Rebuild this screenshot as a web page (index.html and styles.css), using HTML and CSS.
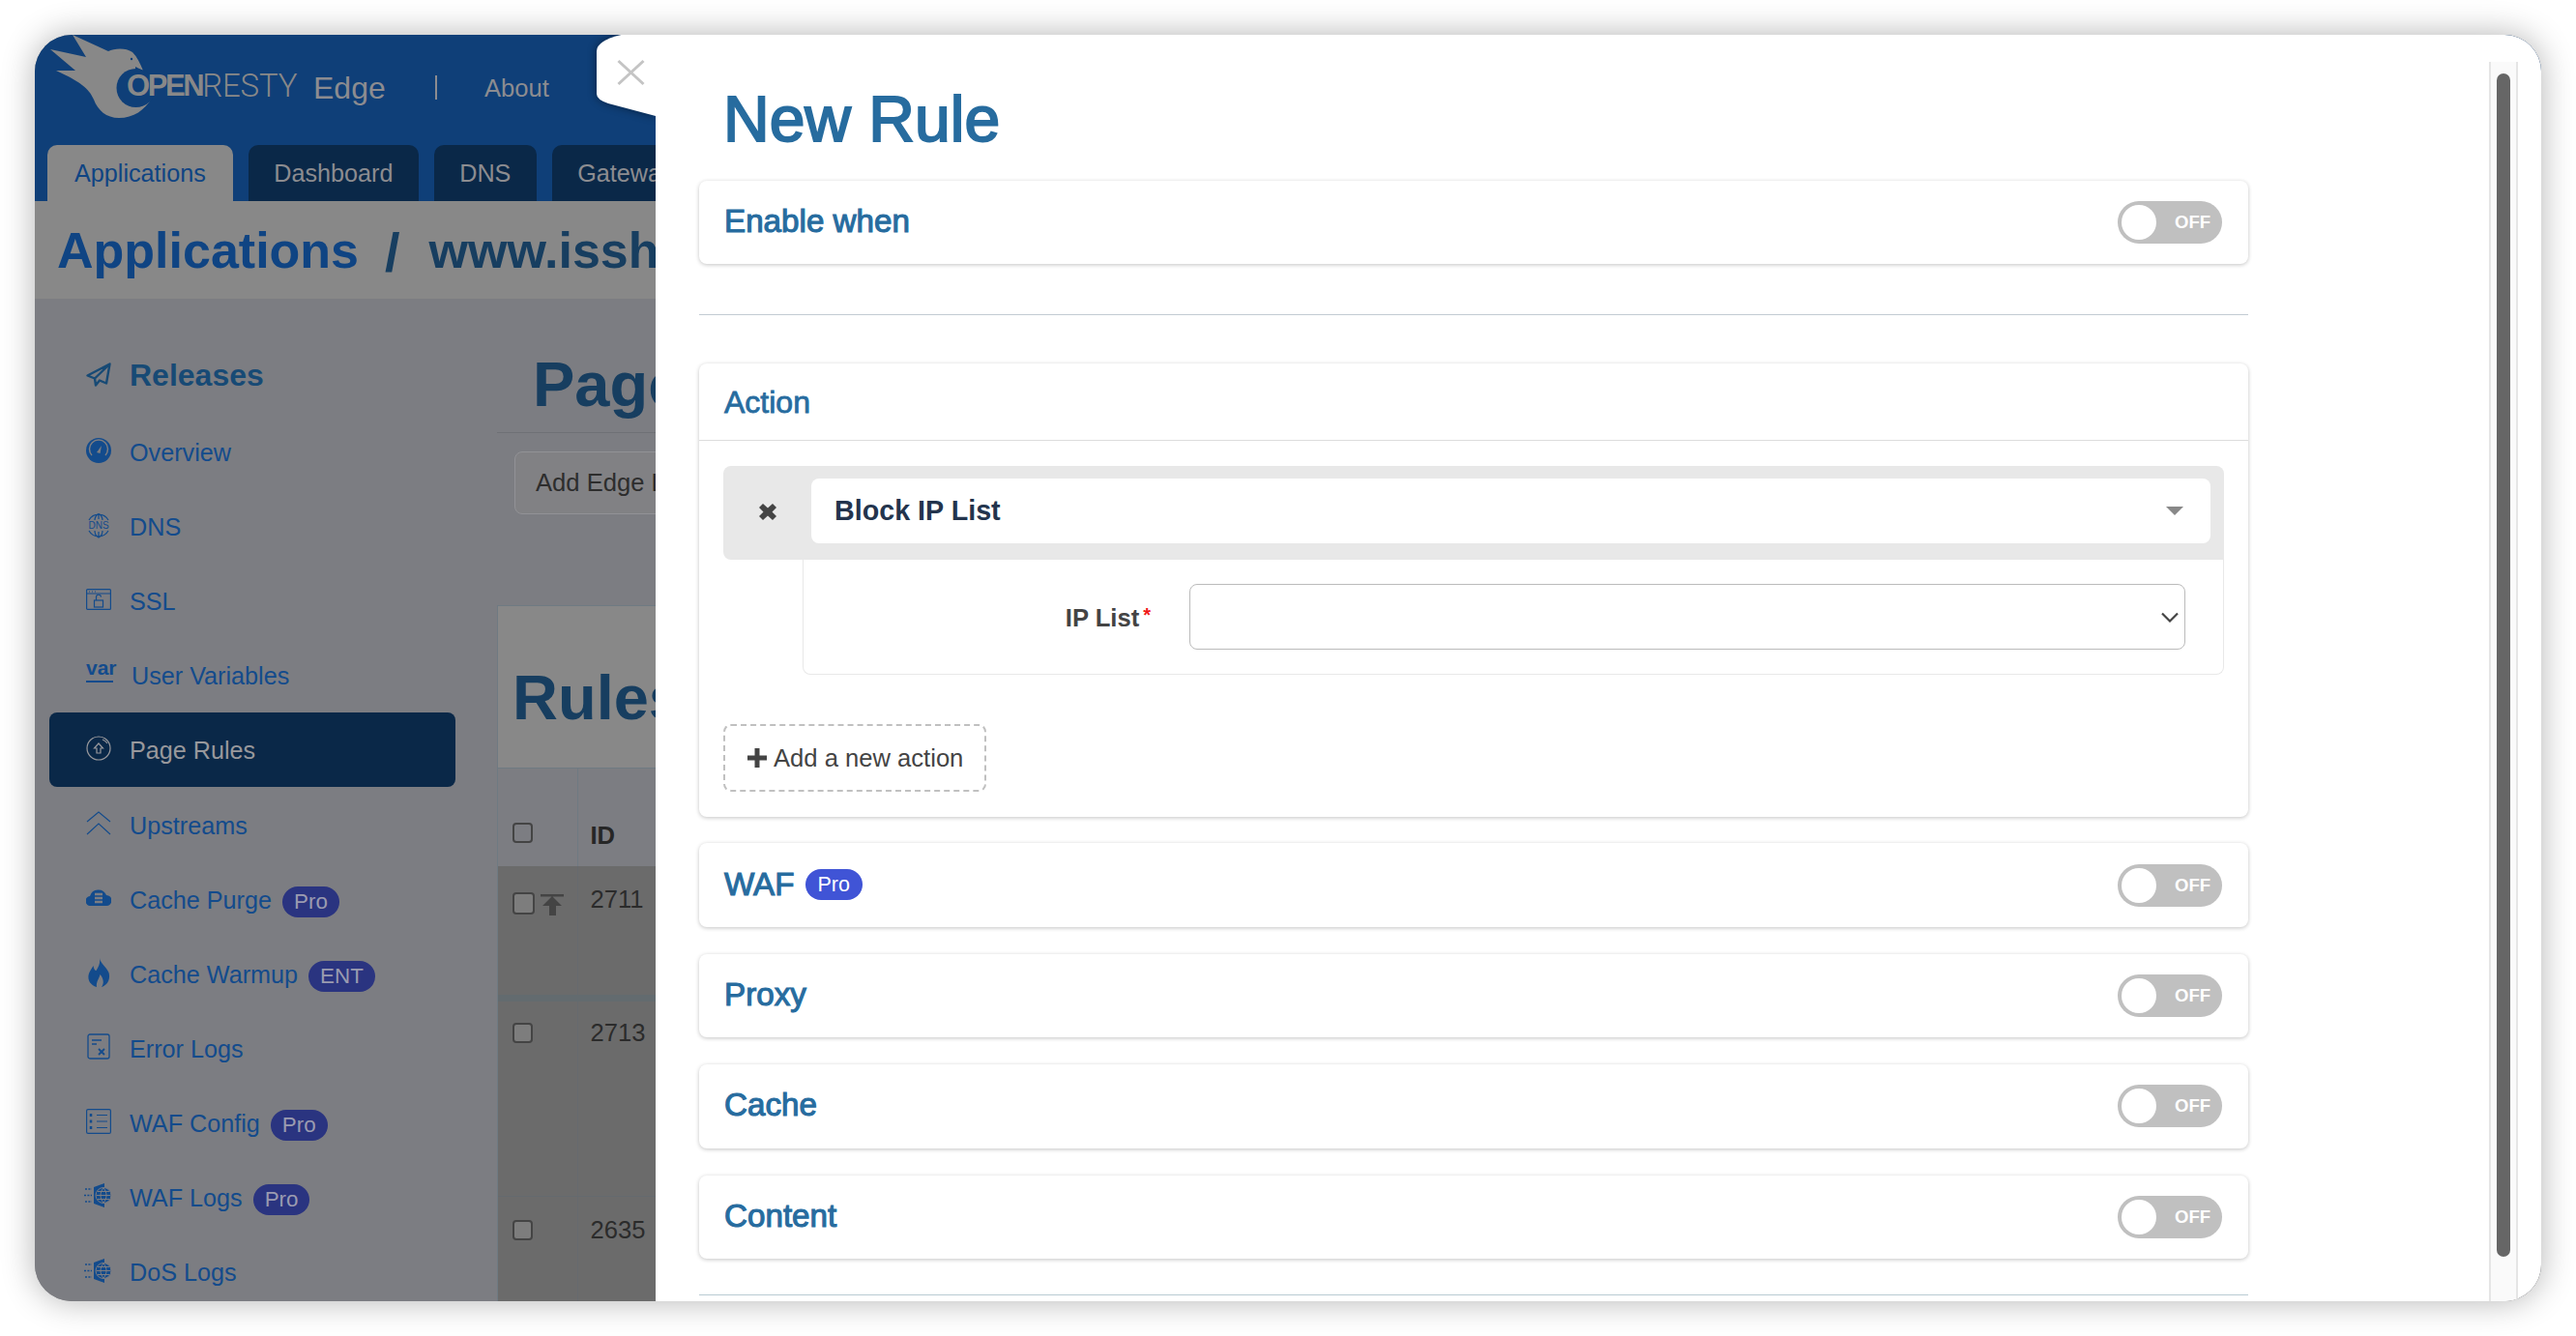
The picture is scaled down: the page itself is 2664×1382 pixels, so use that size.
FILE: index.html
```html
<!DOCTYPE html>
<html lang="en">
<head>
<meta charset="utf-8">
<title>New Rule</title>
<link rel="stylesheet" href="styles.css">
</head>
<body>
<svg class="defs" width="0" height="0">
  <symbol id="waf" viewBox="0 0 29 27">
    <path d="M10 5 21 1V26L10 22Z" fill="#134b8c"/>
    <circle cx="20" cy="13.5" r="8" fill="#134b8c" stroke="#7c7d82" stroke-width="1"/>
    <path d="M12.5 13.5H27.5M20 6C16 10 16 17 20 21M20 6C24 10 24 17 20 21M14 9.5H26M14 17.5H26" fill="none" stroke="#7c7d82" stroke-width="1"/>
    <path d="M1 7H8M0 13.5H8M1 20H8" fill="none" stroke="#134b8c" stroke-width="1.4" stroke-dasharray="2 1.4"/>
  </symbol>
</svg>
<div class="window">
  <div class="app">
    <header class="topbar">
      <div class="toprow">
        <div class="logo">
          <svg class="logo-mark" width="270" height="90" viewBox="0 0 270 90">
            <path d="M35 0 72 17C78 14 90 13 97 18 102 23 105 30 108 37L100 33 100 55 117 65C110 78 98 86 83 86 70 86 61 78 57 67 53 58 47 50 18 37L38 37 12 15 49 23Z" fill="#888"/>
            <circle cx="100.500" cy="55" r="20" fill="#0f3f78"/>
            <circle cx="96" cy="25" r="1.200" fill="#0f3f78"/>
          </svg>
          <div class="logo-text"><span class="open">OPEN</span><span class="resty">RESTY</span></div>
        </div>
        <span class="edge">Edge</span>
        <span class="sep"></span>
        <span class="about">About</span>
      </div>
      <nav class="tabs">
        <a class="tab tab-active">Applications</a>
        <a class="tab">Dashboard</a>
        <a class="tab">DNS</a>
        <a class="tab">Gateway</a>
      </nav>
    </header>
    <div class="crumbs"><span class="crumb-link">Applications</span><span class="crumb-sep">/</span><span class="crumb-app">www.issh</span></div>
    <div class="columns">
      <aside class="sidebar">
        <div class="side-head">
          <svg class="ico" width="26" height="25" viewBox="0 0 26 25" fill="none" stroke="#174a75" stroke-width="2.400" stroke-linejoin="round"><path d="M24.500 1.500 1.500 13.500 9 16.500 10 23.500 14 18.500 21 21.500ZM24.500 1.500 9 16.500"/></svg>
          <span>Releases</span>
        </div>
        <a class="side-row">
          <svg class="ico ico-up" width="26" height="26" viewBox="0 0 26 26"><circle cx="13" cy="13" r="13" fill="#134b8c"/><path d="M6 19A9.500 9.500 0 1 1 20 19" fill="none" stroke="#7c7d82" stroke-width="1.500" transform="translate(0 -1)"/><path d="M11 15 16 8 14.500 16Z" fill="#7c7d82"/></svg>
          <span>Overview</span>
        </a>
        <a class="side-row">
          <svg class="ico" width="26" height="29" viewBox="0 0 26 29" fill="none" stroke="#134b8c" stroke-width="1.200"><path d="M3 9A11.500 11.500 0 0 1 23 9M3 20A11.500 11.500 0 0 0 23 20M13 2.500V8M13 21V27M9 9C9 6 11 3 13 2.500 15 3 17 6 17 9M9 20C9 23 11 26 13 27 15 26 17 23 17 20"/><text class="dns-text" x="13" y="18" text-anchor="middle">DNS</text></svg>
          <span>DNS</span>
        </a>
        <a class="side-row">
          <svg class="ico" width="26" height="22" viewBox="0 0 26 22" fill="none" stroke="#134b8c" stroke-width="1.200"><rect x=".6" y=".6" width="24.800" height="20.800" rx="1"/><path d="M1 5H25M3 3H4M6 3H7M9 3H10"/><rect x="8.500" y="12" width="9" height="7"/><path d="M10.500 12V9A2.500 2.500 0 0 1 15.500 8.500"/></svg>
          <span>SSL</span>
        </a>
        <a class="side-row">
          <span class="var-ico">var</span>
          <span>User Variables</span>
        </a>
        <a class="side-row side-active">
          <svg class="ico" width="26" height="26" viewBox="0 0 26 26" fill="none" stroke="#98989c" stroke-width="1.200"><circle cx="13" cy="13" r="12"/><path d="M22 8A10 10 0 0 0 17 4M13 8 8.500 13H11V18H15V13H17.500Z"/></svg>
          <span>Page Rules</span>
        </a>
        <a class="side-row">
          <svg class="ico" width="26" height="25" viewBox="0 0 26 25" fill="none" stroke="#134b8c" stroke-width="1.100"><path d="M1 11 13 1 25 11M1 24 13 13 25 24"/></svg>
          <span>Upstreams</span>
        </a>
        <a class="side-row">
          <svg class="ico" width="26" height="17" viewBox="0 0 26 17"><path d="M5 17A5 5 0 0 1 4 7 9 9 0 0 1 21 6 5.500 5.500 0 0 1 21 17Z" fill="#134b8c"/><path d="M9 5H17M9 9H17M9 13H17" stroke="#7c7d82" stroke-width="2.400"/></svg>
          <span>Cache Purge</span><span class="badge">Pro</span>
        </a>
        <a class="side-row">
          <svg class="ico" width="26" height="30" viewBox="0 0 26 30"><path d="M14 0C15 6 21 9 23.500 15 25.500 22 22 28 16 30 19 26 18 21 14.500 17 14 21 10 24 11 30 4 28 1 22 3 16 4 13 6 11 7.500 8 8 11 9 13 10.500 13 13 9 15 5 14 0Z" fill="#134b8c"/></svg>
          <span>Cache Warmup</span><span class="badge">ENT</span>
        </a>
        <a class="side-row">
          <svg class="ico" width="26" height="27" viewBox="0 0 26 27" fill="none" stroke="#134b8c" stroke-width="1.300"><rect x="2" y="1" width="22" height="25" rx="2"/><path d="M6 7H16M6 11H11"/><path d="M13 16 19 22M19 16 13 22" stroke-width="1.800"/></svg>
          <span>Error Logs</span>
        </a>
        <a class="side-row">
          <svg class="ico" width="26" height="26" viewBox="0 0 26 26" fill="none" stroke="#134b8c" stroke-width="1.200"><rect x=".6" y=".6" width="24.800" height="24.800" rx="1.500"/><path d="M11 6.500H22M11 13H22M11 19.500H22"/><path d="M5 5V8M5 11.500V14.500M5 18V21" stroke-width="2.500"/></svg>
          <span>WAF Config</span><span class="badge">Pro</span>
        </a>
        <a class="side-row">
          <svg class="ico ico-waf" width="29" height="27"><use href="#waf"/></svg>
          <span>WAF Logs</span><span class="badge">Pro</span>
        </a>
        <a class="side-row">
          <svg class="ico ico-waf" width="29" height="27"><use href="#waf"/></svg>
          <span>DoS Logs</span>
        </a>
      </aside>
      <main class="main">
        <h1 class="page-title">Page Rules</h1>
        <div class="toolbar"><button class="btn-add">Add Edge L</button></div>
        <section class="rules-card">
          <h2 class="rules-title">Rules</h2>
          <table class="rules">
            <thead><tr><th class="col-check"><span class="check check-head"></span></th><th>ID</th></tr></thead>
            <tbody>
              <tr class="row-pinned"><td class="col-check"><div class="check-wrap"><span class="check check-big"></span><svg width="24" height="24" viewBox="0 0 24 24"><path d="M0 2H24V4.500H0ZM12 4 22 14H16V24H9V14H2Z" fill="#444"/></svg></div></td><td>2711</td></tr>
              <tr class="row-b"><td class="col-check"><span class="check"></span></td><td>2713</td></tr>
              <tr class="row-c"><td class="col-check"><span class="check"></span></td><td>2635</td></tr>
            </tbody>
          </table>
        </section>
      </main>
    </div>
  </div>

  <svg class="close-tab" width="61" height="84" viewBox="0 0 61 84"><path d="M25.500 0Q0 6 0 17V61Q0 67 12 71L61 84V0Z" fill="#fff"/><path d="M22.500 27 48.500 51M48.500 27 22.500 51" stroke="#c4c4c4" stroke-width="3" fill="none"/></svg>

  <aside class="drawer">
    <div class="drawer-body">
      <h1 class="drawer-title">New Rule</h1>
      <div class="panel panel-row"><span class="panel-name">Enable when</span><span class="toggle"><i class="knob"></i><b>OFF</b></span></div>
      <hr class="rule-top">
      <div class="panel panel-action">
        <div class="action-title">Action</div>
        <div class="action-body">
          <div class="action-head">
            <svg class="action-x" width="18" height="17" viewBox="0 0 18 17"><path d="M4 0 9 4.500 14 0 18 4 13.500 8.500 18 13 14 17 9 12.500 4 17 0 13 4.500 8.500 0 4Z" fill="#444"/></svg>
            <div class="action-select"><span>Block IP List</span><i class="caret"></i></div>
          </div>
          <div class="action-fields">
            <label class="field-label">IP List<em>*</em></label>
            <div class="field-select"><svg width="18" height="11" viewBox="0 0 18 11"><path d="M1 1.500 9 9.500 17 1.500" fill="none" stroke="#444" stroke-width="2.200"/></svg></div>
          </div>
          <button class="btn-new"><svg width="20" height="20" viewBox="0 0 20 20"><path d="M7.500 0H12.500V7.500H20V12.500H12.500V20H7.500V12.500H0V7.500H7.500Z" fill="#444"/></svg>Add a new action</button>
        </div>
      </div>
      <div class="panel-list">
        <div class="panel panel-row"><span class="panel-name">WAF<span class="badge-bright">Pro</span></span><span class="toggle"><i class="knob"></i><b>OFF</b></span></div>
        <div class="panel panel-row"><span class="panel-name">Proxy</span><span class="toggle"><i class="knob"></i><b>OFF</b></span></div>
        <div class="panel panel-row"><span class="panel-name">Cache</span><span class="toggle"><i class="knob"></i><b>OFF</b></span></div>
        <div class="panel panel-row"><span class="panel-name">Content</span><span class="toggle"><i class="knob"></i><b>OFF</b></span></div>
      </div>
      <hr class="rule-bottom">
    </div>
    <div class="scroll-track"><div class="scroll-thumb"></div></div>
  </aside>
</div>
</body>
</html>
```

FILE: styles.css
```css
* { box-sizing: border-box; }
html, body { margin: 0; height: 100%; }
body {
  padding: 36px;
  background: #fff;
  font-family: "Liberation Sans", Arial, sans-serif;
  font-size: 25.6px;
  overflow: hidden;
}
.defs { position: absolute; }
.window {
  position: relative;
  height: 1310px;
  border-radius: 38px;
  box-shadow: 0 0 34px rgba(0, 0, 0, .3);
  overflow: hidden;
  background: #7c7d82;
}
.app { height: 100%; display: flex; flex-direction: column; }

/* top bar */
.topbar { height: 172px; background: #0f3f78; flex: none; }
.toprow { height: 114px; display: flex; align-items: flex-start; padding-left: 4px; }
.logo { position: relative; width: 284px; height: 90px; flex: none; }
.logo-mark { display: block; }
.logo-text {
  position: absolute; left: 91px; top: 39px;
  display: flex; line-height: 28px; color: #888; white-space: nowrap;
}
.open { font-size: 31px; font-weight: bold; letter-spacing: -2.400px; }
.resty { font-family: Roboto, sans-serif; font-weight: 300; font-size: 33px; letter-spacing: -.2px; }
.edge { font-size: 32px; line-height: 1; color: #8c8c90; margin-top: 39px; width: 126px; }
.sep { width: 2px; height: 25px; background: #8c8c90; margin-top: 42px; margin-right: 49px; }
.about { line-height: 1; color: #8c8c90; margin-top: 43px; }
.tabs { display: flex; gap: 16px; padding-left: 13px; height: 58px; overflow: hidden; font-size: 25.200px; }
.tab {
  height: 59px; padding: 0 26.400px; line-height: 58px;
  background: #0a2848; color: #8c8c90; border-radius: 10px 10px 0 0;
}
.tab-active { height: 58px; padding: 0 28px; background: #888; color: #0f4483; }

/* breadcrumb */
.crumbs {
  height: 101px; flex: none; background: #888; padding: 25px 0 0 23px;
  font-size: 52px; font-weight: bold; line-height: 1; white-space: nowrap;
  display: flex;
}
.crumb-link { color: #0f4483; }
.crumb-sep { color: #173e60; margin: 0 30px 0 27px; font-size: 56px; }
.crumb-app { color: #173e60; }

/* sidebar */
.columns { flex: 1; display: flex; min-height: 0; }
.sidebar { width: 478px; flex: none; padding: 41px 43px 0 15px; background: #7c7d82; overflow: hidden; font-size: 25.200px; }
.side-head {
  height: 77px; margin-bottom: 2px; padding-left: 38px;
  display: flex; align-items: center;
  font-size: 32px; font-weight: bold; color: #174a75;
}
.side-row {
  height: 77.100px; padding: 2px 0 0 38px; border-radius: 8px;
  display: flex; align-items: center; color: #134b8c; white-space: nowrap;
}
.side-active { background: #0a2848; color: #98989c; }
.ico { flex: none; margin-right: 19px; margin-top: -5px; }
.side-head .ico { margin-top: -2px; }
.ico-waf { margin-left: -2px; margin-right: 18px; }
.var-ico {
  width: 28px; margin-right: 19px; margin-top: -13px;
  font-size: 21px; font-weight: bold; line-height: 21px; text-align: center;
  border-bottom: 2px solid #134b8c; padding-bottom: 3px;
}
.dns-text { font: 10px "Liberation Sans", sans-serif; fill: #134b8c; stroke: none; }
.badge {
  margin-left: 11px; margin-top: 3px; height: 32px; padding: 0 12px;
  border-radius: 16px; background: #2a3480; color: #9a9bb0;
  font-size: 22.400px; line-height: 32px;
}

/* main behind the drawer */
.main { flex: 1; min-width: 0; background: #7c7d82; overflow: hidden; }
.page-title {
  margin: 0; height: 139px; padding: 0 0 17px 37px; white-space: nowrap;
  display: flex; align-items: flex-end; border-bottom: 1px solid #6e7075;
  font-size: 65px; font-weight: bold; line-height: 1; color: #173e60;
}
.toolbar { padding: 19px 0 0 18px; }
.btn-add {
  display: block; width: 300px; height: 65px; padding: 0 0 0 21px; text-align: left;
  background: #818184; border: 1px solid #929296; border-radius: 8px;
  font: inherit; color: #2d2d2d;
}
.rules-card { margin-top: 94px; background: #888; border: 1px solid #6f7a82; border-right: 0; }
.rules-title {
  margin: 0; height: 168px; padding: 62px 0 0 15px; border-bottom: 1px solid #6f7a82;
  font-size: 65px; font-weight: bold; line-height: 1; color: #173e60;
}
.rules { width: 1100px; border-collapse: collapse; color: #2b2b2b; }
.rules th {
  height: 101px; padding: 54px 0 0 13px; text-align: left; vertical-align: top;
  background: #7c7d82; color: #262626; line-height: 30px;
}
.rules td { padding: 19px 0 0 13px; vertical-align: top; background: #6b6b6b; line-height: 30px; }
.rules .col-check { width: 82px; padding-left: 15px; border-right: 1px solid #666a6e; }
.rules th.col-check { border-right-color: #6f7a82; padding-top: 56px; }
.row-pinned td { height: 136px; border-bottom: 7px solid #636b6f; }
.row-b td { height: 205px; padding-top: 17px; border-bottom: 1px solid #646a6e; }
.row-c td { height: 110px; }
.check {
  display: block; width: 21px; height: 21px; border: 2px solid #444;
  border-radius: 4px; background: #7d7d7d;
}
.check-head { background: #7c7d82; }
.row-b .check { margin-top: 5px; }
.row-c .check { margin-top: 5px; }
.check-wrap { display: flex; gap: 6px; margin-top: 8px; align-items: flex-start; }
.check-big { width: 23px; height: 23px; flex: none; }

/* close tab */
.close-tab {
  position: absolute; left: 581px; top: 0; display: block;
  filter: drop-shadow(0 0 5px rgba(0, 0, 0, .45));
}

/* drawer */
.drawer {
  position: absolute; left: 642px; top: 0; right: 0; bottom: 0;
  display: flex; background: #fff;
}
.drawer-body { flex: 1; min-width: 0; padding: 55px 45px 0; overflow: hidden; }
.drawer-title {
  margin: 0 0 32px 25px; height: 64px; font-size: 66px; font-weight: normal; line-height: 64px;
  color: #276c9f; -webkit-text-stroke: 2px #276c9f;
}
.panel { width: 1602px; background: #fff; border-radius: 8px; box-shadow: 0 1px 4px rgba(0, 0, 0, .24); }
.panel-row {
  height: 86.400px; padding: 0 27px 0 26px;
  display: flex; align-items: center; justify-content: space-between;
}
.panel-name {
  display: flex; align-items: center; margin-top: -2px;
  font-size: 33.200px; color: #276c9f; -webkit-text-stroke: 1.100px #276c9f;
}
.badge-bright {
  margin-left: 11px; height: 32px; padding: 0 13px; border-radius: 16px;
  background: #4054d6; color: #fff; font-size: 21.500px; line-height: 32px;
  -webkit-text-stroke: 0;
}
.toggle {
  width: 108px; height: 44px; padding: 4px; border-radius: 22px; background: #c0c0c0;
  display: flex; align-items: center;
}
.knob { width: 36px; height: 36px; border-radius: 50%; background: #fff; }
.toggle b { margin-left: 19px; font-size: 18.500px; color: #fff; }
.rule-top, .rule-bottom { width: 1602px; height: 1px; margin: 0; border: 0; background: #c2cbd3; }
.rule-top { margin: 52px 0 50px; }
.rule-bottom { margin-top: 37px; background: #b9cbd3; }
.action-title {
  height: 80px; padding-left: 26px; border-bottom: 1px solid #dcdcdc;
  font-size: 32px; line-height: 80px; color: #276c9f; -webkit-text-stroke: .8px #276c9f;
}
.action-body { padding: 26px 25px 26px; }
.action-head {
  height: 97px; padding: 13px 14px 17px 91px; position: relative;
  background: #e8e8e8; border-radius: 8px 8px 0 8px;
}
.action-x { position: absolute; left: 37px; top: 39px; }
.action-select {
  height: 67px; padding: 0 28px 0 24px; background: #fff; border-radius: 8px;
  display: flex; align-items: center; justify-content: space-between;
  font-size: 28.700px; font-weight: bold; color: #23344d;
}
.caret { width: 0; height: 0; border: 9px solid transparent; border-top: 9px solid #888; border-bottom: 0; }
.action-fields {
  height: 119px; margin-left: 82px; padding-right: 39px;
  display: flex; align-items: center; justify-content: flex-end;
  border: 1px solid #e8e8e8; border-top: 0; border-radius: 0 0 8px 8px;
}
.field-label { font-weight: bold; color: #444; margin-right: 40px; display: flex; margin-top: 2px; }
.field-label em { color: #f01818; font-size: 20px; font-style: normal; font-weight: bold; margin-left: 4px; }
.field-select {
  width: 1030px; height: 68px; padding-right: 6px; border: 1.500px solid #bbb; border-radius: 8px;
  display: flex; align-items: center; justify-content: flex-end;
}
.btn-new {
  width: 272px; height: 70px; margin-top: 51px; padding: 0 0 0 23px;
  display: flex; align-items: center; gap: 7px;
  background: #fff; border: 2px dashed #c0c0c0; border-radius: 8px;
  font: inherit; color: #444;
}
.panel-list { margin-top: 27px; display: flex; flex-direction: column; gap: 28px; }

/* drawer scrollbar */
.scroll-track {
  flex: none; width: 30px; margin: 28px 24px 0 0; padding: 12px 0 0 6px;
  background: #fafafa; border-left: 2px solid #e5e5e5; border-right: 2px solid #e5e5e5;
}
.scroll-thumb { width: 14px; height: 1224px; border-radius: 7px; background: #666; }
```
